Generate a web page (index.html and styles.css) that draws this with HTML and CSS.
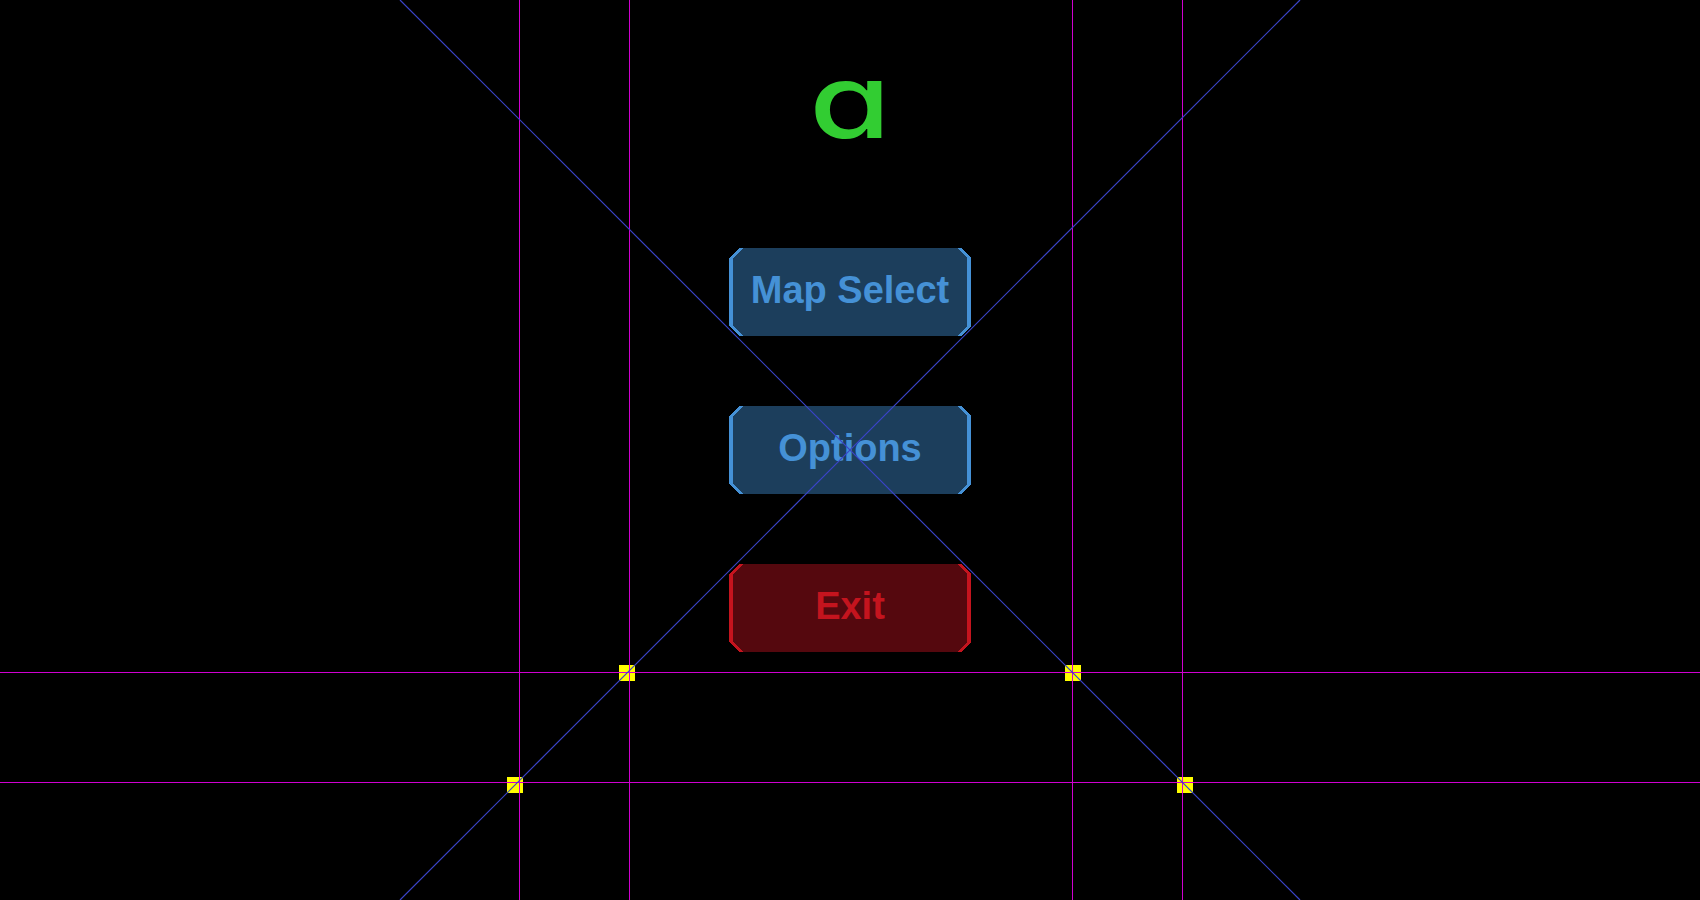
FILE: index.html
```html
<!DOCTYPE html>
<html lang="en">
<head>
<meta charset="utf-8">
<title>Menu</title>
<link rel="stylesheet" href="styles.css">
</head>
<body>
<main class="menu">
  <h1 class="logo"><span class="logo-glyph">a</span></h1>
  <nav class="buttons">
    <button class="btn btn-blue" type="button">
      <svg class="frame" viewBox="0 0 242 88" width="242" height="88" shape-rendering="crispEdges" aria-hidden="true">
        <polygon class="bg" points="10,0 232,0 242,10 242,78 232,88 10,88 0,78 0,10"/>
        <polygon class="edge" points="10,0 14,0 4,10 4,78 14,88 10,88 0,78 0,10"/>
        <polygon class="edge" points="232,0 228,0 238,10 238,78 228,88 232,88 242,78 242,10"/>
      </svg>
      <span class="label">Map Select</span>
    </button>
    <button class="btn btn-blue" type="button">
      <svg class="frame" viewBox="0 0 242 88" width="242" height="88" shape-rendering="crispEdges" aria-hidden="true">
        <polygon class="bg" points="10,0 232,0 242,10 242,78 232,88 10,88 0,78 0,10"/>
        <polygon class="edge" points="10,0 14,0 4,10 4,78 14,88 10,88 0,78 0,10"/>
        <polygon class="edge" points="232,0 228,0 238,10 238,78 228,88 232,88 242,78 242,10"/>
      </svg>
      <span class="label">Options</span>
    </button>
    <button class="btn btn-red" type="button">
      <svg class="frame" viewBox="0 0 242 88" width="242" height="88" shape-rendering="crispEdges" aria-hidden="true">
        <polygon class="bg" points="10,0 232,0 242,10 242,78 232,88 10,88 0,78 0,10"/>
        <polygon class="edge" points="10,0 14,0 4,10 4,78 14,88 10,88 0,78 0,10"/>
        <polygon class="edge" points="232,0 228,0 238,10 238,78 228,88 232,88 242,78 242,10"/>
      </svg>
      <span class="label">Exit</span>
    </button>
  </nav>
</main>
<svg class="overlay" viewBox="0 0 1700 900" width="1700" height="900" aria-hidden="true">
  <g class="marks">
    <rect x="619" y="665" width="16" height="16"/>
    <rect x="1065" y="665" width="16" height="16"/>
    <rect x="507" y="777" width="16" height="16"/>
    <rect x="1177" y="777" width="16" height="16"/>
  </g>
  <g class="guides" shape-rendering="crispEdges">
    <line x1="519" y1="0" x2="519" y2="900"/>
    <line x1="629" y1="0" x2="629" y2="900"/>
    <line x1="1072" y1="0" x2="1072" y2="900"/>
    <line x1="1182" y1="0" x2="1182" y2="900"/>
    <line x1="0" y1="672.5" x2="1700" y2="672.5"/>
    <line x1="0" y1="782.5" x2="1700" y2="782.5"/>
  </g>
  <g class="diag">
    <line x1="400" y1="0" x2="1300" y2="900"/>
    <line x1="1300" y1="0" x2="400" y2="900"/>
  </g>
</svg>
</body>
</html>
```
FILE: styles.css
```css
html, body {
  margin: 0;
  padding: 0;
  background: #000;
}

body {
  width: 1700px;
  height: 900px;
  overflow: hidden;
  position: relative;
}

.menu {
  display: flex;
  flex-direction: column;
  align-items: center;
  padding-top: 44px;
}

.logo {
  margin: 0;
  font-family: Inter, "Noto Sans", sans-serif;
  font-feature-settings: "cv11" 1;
  font-weight: 500;
  font-size: 104px;
  line-height: 112px;
  height: 112px;
  color: #32cd32;
}

.logo-glyph {
  display: inline-block;
  transform: scaleX(1.27);
}

.buttons {
  margin-top: 92px;
  display: flex;
  flex-direction: column;
  align-items: center;
  gap: 70px;
}

.btn {
  position: relative;
  width: 242px;
  height: 88px;
  padding: 0 0 4px 0;
  margin: 0;
  border: 0;
  background: none;
  display: flex;
  align-items: center;
  justify-content: center;
  font-family: "Liberation Sans", Arial, sans-serif;
  font-weight: 700;
  font-size: 38px;
  line-height: normal;
  cursor: pointer;
}

.frame {
  position: absolute;
  left: 0;
  top: 0;
  display: block;
}

.label {
  position: relative;
}

.btn-blue { color: #4591d6; }
.btn-blue .bg { fill: #1c3e5c; }
.btn-blue .edge { fill: #4591d6; }

.btn-red { color: #c4141e; }
.btn-red .bg { fill: #55080e; }
.btn-red .edge { fill: #c4141e; }

.overlay {
  position: absolute;
  left: 0;
  top: 0;
  pointer-events: none;
}

.marks rect { fill: #ffff00; }

.guides line {
  stroke: #d000d0;
  stroke-width: 1;
}

.diag line {
  stroke: #3a44c8;
  stroke-width: 1.2;
}
```
